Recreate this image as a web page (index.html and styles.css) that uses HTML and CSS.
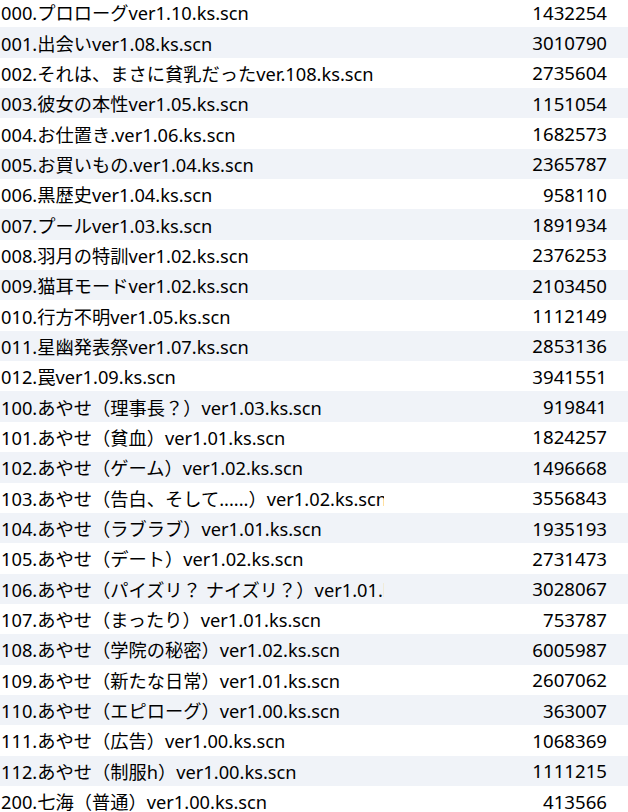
FILE: index.html
```html
<!DOCTYPE html>
<html lang="ja">
<head>
<meta charset="utf-8">
<link rel="stylesheet" href="styles.css">
</head>
<body>
<div class="list">
  <div class="row"><div class="name">000.プロローグver1.10.ks.scn</div><div class="size">1432254</div></div>
  <div class="row"><div class="name">001.出会いver1.08.ks.scn</div><div class="size">3010790</div></div>
  <div class="row"><div class="name">002.それは、まさに貧乳だったver.108.ks.scn</div><div class="size">2735604</div></div>
  <div class="row"><div class="name">003.彼女の本性ver1.05.ks.scn</div><div class="size">1151054</div></div>
  <div class="row"><div class="name">004.お仕置き.ver1.06.ks.scn</div><div class="size">1682573</div></div>
  <div class="row"><div class="name">005.お買いもの.ver1.04.ks.scn</div><div class="size">2365787</div></div>
  <div class="row"><div class="name">006.黒歴史ver1.04.ks.scn</div><div class="size">958110</div></div>
  <div class="row"><div class="name">007.プールver1.03.ks.scn</div><div class="size">1891934</div></div>
  <div class="row"><div class="name">008.羽月の特訓ver1.02.ks.scn</div><div class="size">2376253</div></div>
  <div class="row"><div class="name">009.猫耳モードver1.02.ks.scn</div><div class="size">2103450</div></div>
  <div class="row"><div class="name">010.行方不明ver1.05.ks.scn</div><div class="size">1112149</div></div>
  <div class="row"><div class="name">011.星幽発表祭ver1.07.ks.scn</div><div class="size">2853136</div></div>
  <div class="row"><div class="name">012.罠ver1.09.ks.scn</div><div class="size">3941551</div></div>
  <div class="row"><div class="name">100.あやせ（理事長？）ver1.03.ks.scn</div><div class="size">919841</div></div>
  <div class="row"><div class="name">101.あやせ（貧血）ver1.01.ks.scn</div><div class="size">1824257</div></div>
  <div class="row"><div class="name">102.あやせ（ゲーム）ver1.02.ks.scn</div><div class="size">1496668</div></div>
  <div class="row"><div class="name">103.あやせ（告白、そして......）ver1.02.ks.scn</div><div class="size">3556843</div></div>
  <div class="row"><div class="name">104.あやせ（ラブラブ）ver1.01.ks.scn</div><div class="size">1935193</div></div>
  <div class="row"><div class="name">105.あやせ（デート）ver1.02.ks.scn</div><div class="size">2731473</div></div>
  <div class="row"><div class="name">106.あやせ（パイズリ？ ナイズリ？）ver1.01.ks.scn</div><div class="size">3028067</div></div>
  <div class="row"><div class="name">107.あやせ（まったり）ver1.01.ks.scn</div><div class="size">753787</div></div>
  <div class="row"><div class="name">108.あやせ（学院の秘密）ver1.02.ks.scn</div><div class="size">6005987</div></div>
  <div class="row"><div class="name">109.あやせ（新たな日常）ver1.01.ks.scn</div><div class="size">2607062</div></div>
  <div class="row"><div class="name">110.あやせ（エピローグ）ver1.00.ks.scn</div><div class="size">363007</div></div>
  <div class="row"><div class="name">111.あやせ（広告）ver1.00.ks.scn</div><div class="size">1068369</div></div>
  <div class="row"><div class="name">112.あやせ（制服h）ver1.00.ks.scn</div><div class="size">1111215</div></div>
  <div class="row"><div class="name">200.七海（普通）ver1.00.ks.scn</div><div class="size">413566</div></div>
</div>
</body>
</html>
```

FILE: styles.css
```css
html, body {
  margin: 0;
  padding: 0;
  background: #ffffff;
  overflow: hidden;
}
.list {
  display: flex;
  flex-direction: column;
  margin-top: -3px;
  font-family: "Noto Sans", "Noto Sans CJK JP", "Noto Sans CJK SC", sans-serif;
  font-size: 18.67px;
  color: #000;
}
.row {
  display: flex;
  align-items: center;
  height: 30.35px;
  flex: none;
}
.row:nth-child(even) {
  background: #f0f3f8;
}
.name {
  width: 384px;
  padding-left: 1px;
  box-sizing: border-box;
  white-space: nowrap;
  overflow: hidden;
  flex: none;
  font-size: 18.25px;
}
.size {
  flex: 1;
  text-align: right;
  padding-right: 21px;
}
```
